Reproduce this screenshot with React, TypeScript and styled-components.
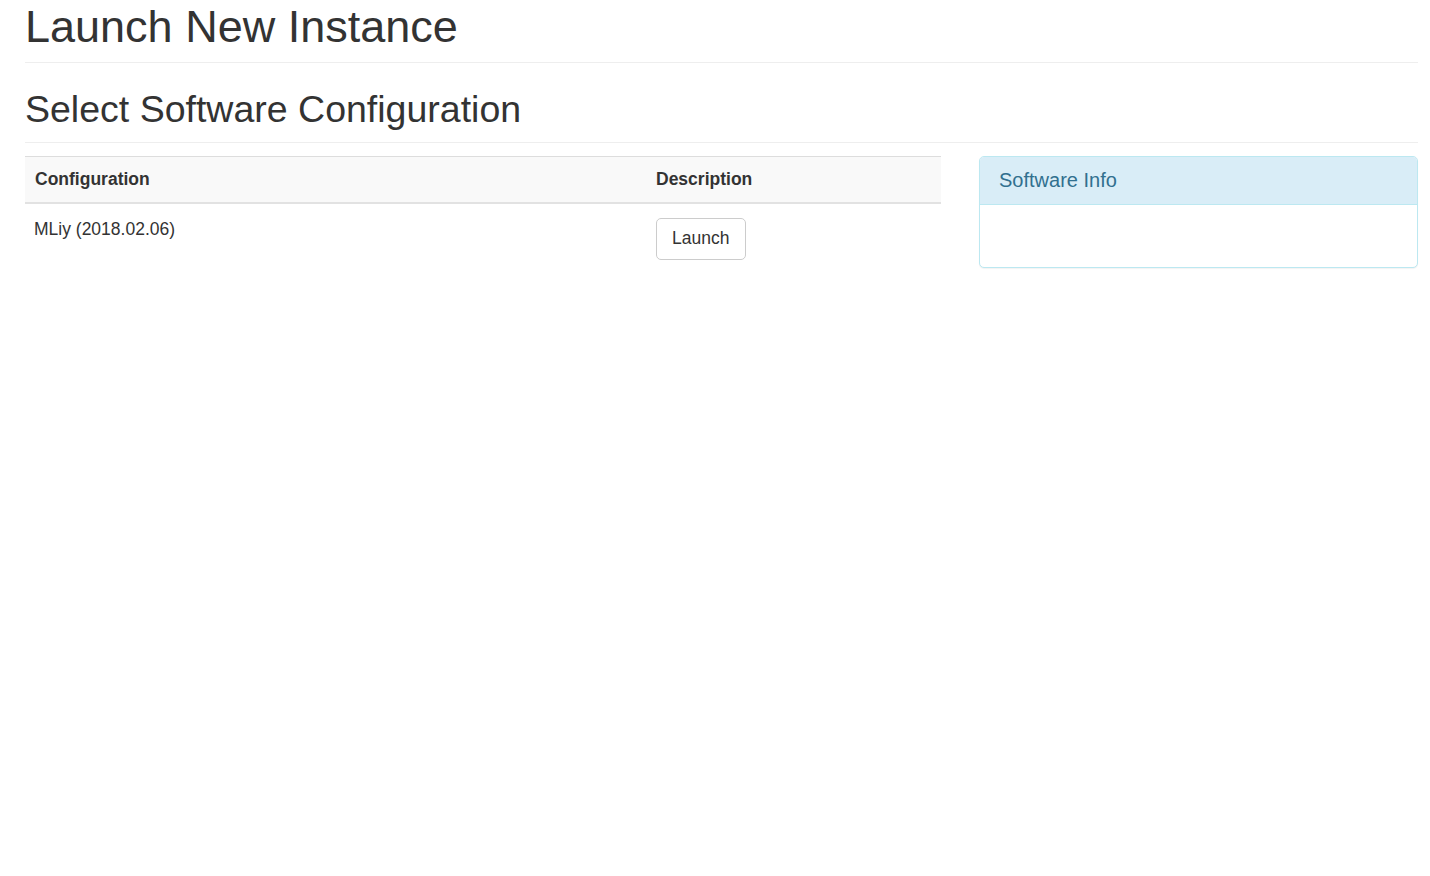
import * as React from 'react'
import styled, { createGlobalStyle } from 'styled-components'

const GlobalStyle = createGlobalStyle`
  html, body {
    margin: 0;
    padding: 0;
    background: #fff;
  }
  body {
    font-family: "Liberation Sans", Arial, Helvetica, sans-serif;
    font-size: 17.5px;
    line-height: 1.42857;
    color: #333;
  }
  * {
    box-sizing: border-box;
  }
`

const Page = styled.div`
  padding: 0 12px 0 25px;
`

const PageHeader = styled.div<{ $top: number; $bottom: number }>`
  padding-top: ${(p) => p.$top}px;
  padding-bottom: ${(p) => p.$bottom}px;
  border-bottom: 1px solid #eee;
`

const Title = styled.h1`
  margin: 0;
  font-size: 45px;
  font-weight: 500;
  line-height: 1.1;
`

const SubTitle = styled.h2`
  margin: 0;
  font-size: 37.5px;
  font-weight: 500;
  line-height: 1.1;
`

const Row = styled.div`
  display: flex;
  align-items: flex-start;
  gap: 38px;
  margin-top: 13px;
`

const MainCol = styled.div`
  width: 916px;
  flex: none;
`

const SideCol = styled.div`
  flex: 1;
`

const Table = styled.table`
  width: 100%;
  border-collapse: collapse;
  border-spacing: 0;
  border-top: 1px solid #ddd;
`

const HeadCell = styled.th<{ $width?: number }>`
  width: ${(p) => (p.$width ? `${p.$width}px` : 'auto')};
  padding: 10px;
  text-align: left;
  font-weight: 700;
  background: #f9f9f9;
  border-bottom: 2px solid #e2e2e2;
  vertical-align: bottom;
`

const Cell = styled.td`
  padding: 13px 9px 10px;
  vertical-align: top;
`

const ActionCell = styled(Cell)`
  padding: 14px 10px 10px;
`

const Button = styled.button`
  display: inline-block;
  padding: 7.5px 15.5px 7.5px 15px;
  font-family: inherit;
  font-size: 17.5px;
  line-height: 1.42857;
  color: #333;
  background: #fff;
  border: 1px solid #ccc;
  border-radius: 5px;
  cursor: pointer;
  &:hover {
    background: #e6e6e6;
    border-color: #adadad;
  }
`

const Panel = styled.div`
  background: #fff;
  border: 1px solid #bce8f1;
  border-radius: 5px;
  box-shadow: 0 1px 1px rgba(0, 0, 0, 0.05);
  overflow: hidden;
`

const PanelHeading = styled.div`
  padding: 12.5px 19px;
  background: #d9edf7;
  border-bottom: 1px solid #bce8f1;
  color: #31708f;
`

const PanelTitle = styled.h3`
  margin: 0;
  font-size: 20px;
  font-weight: 500;
  line-height: 1.1;
`

const PanelBody = styled.div`
  padding: 19px;
  min-height: 62px;
`

const configs = [{ id: 'mliy', name: 'MLiy (2018.02.06)' }]

const App: React.FC = () => (
  <>
    <GlobalStyle />
    <Page>
      <PageHeader $top={2} $bottom={10}>
        <Title>Launch New Instance</Title>
      </PageHeader>
      <PageHeader $top={26} $bottom={12}>
        <SubTitle>Select Software Configuration</SubTitle>
      </PageHeader>
      <Row>
        <MainCol>
          <Table>
            <thead>
              <tr>
                <HeadCell $width={621}>Configuration</HeadCell>
                <HeadCell>Description</HeadCell>
              </tr>
            </thead>
            <tbody>
              {configs.map((c) => (
                <tr key={c.id}>
                  <Cell>{c.name}</Cell>
                  <ActionCell>
                    <Button type="button">Launch</Button>
                  </ActionCell>
                </tr>
              ))}
            </tbody>
          </Table>
        </MainCol>
        <SideCol>
          <Panel>
            <PanelHeading>
              <PanelTitle>Software Info</PanelTitle>
            </PanelHeading>
            <PanelBody />
          </Panel>
        </SideCol>
      </Row>
    </Page>
  </>
)

export default App
